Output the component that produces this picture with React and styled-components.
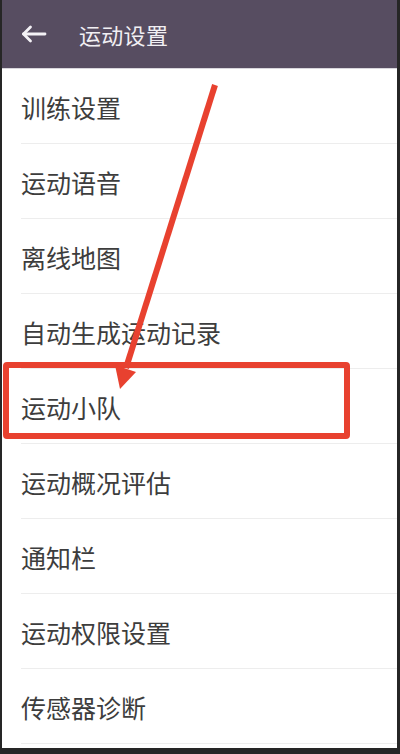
import React from 'react'
import styled, { createGlobalStyle } from 'styled-components'

const Global = createGlobalStyle`
  html, body { margin: 0; padding: 0; background: #2a2a2a; }
  body { font-family: "Noto Sans CJK SC", "Noto Sans", sans-serif; }
`

const Frame = styled.div`
  position: relative;
  width: 400px;
  height: 754px;
  box-sizing: border-box;
  border-left: 2px solid #262626;
  border-right: 3px solid #262626;
  border-bottom: 6px solid #262626;
  background: #fff;
  overflow: hidden;
`

const Toolbar = styled.header`
  height: 69px;
  background: #574d61;
  display: flex;
  align-items: center;
  padding-left: 19px;
  gap: 32px;
  border-bottom: 1px solid #d8d6dc;
  box-sizing: border-box;
`

const Title = styled.span`
  color: #f1eff3;
  font-size: 22px;
  letter-spacing: 0.3px;
`

const List = styled.ul`
  list-style: none;
  margin: 0;
  padding: 0;
`

const Row = styled.li`
  height: 75px;
  margin-left: 19px;
  display: flex;
  align-items: center;
  box-sizing: border-box;
  border-bottom: 1px solid #ededed;
  color: #3d3d3d;
  font-size: 25px;
  padding-top: 1px;
`

const Highlight = styled.div`
  position: absolute;
  left: 1px;
  top: 362px;
  width: 347px;
  height: 77px;
  box-sizing: border-box;
  border: 6px solid #e8412f;
  border-radius: 4px;
  pointer-events: none;
`

const Pointer = styled.svg`
  position: absolute;
  left: 0;
  top: 0;
  pointer-events: none;
`

const BackArrow = () => (
  <svg width="26" height="18" viewBox="0 0 26 18" fill="none" stroke="#f4f2f6" strokeWidth="2.8" strokeLinecap="round" strokeLinejoin="round">
    <path d="M2.5 9H24" />
    <path d="M9.5 2 2.5 9l7 7" />
  </svg>
)

const items = [
  '训练设置',
  '运动语音',
  '离线地图',
  '自动生成运动记录',
  '运动小队',
  '运动概况评估',
  '通知栏',
  '运动权限设置',
  '传感器诊断',
]

export default function App() {
  return (
    <>
      <Global />
      <Frame>
        <Toolbar>
          <BackArrow />
          <Title>运动设置</Title>
        </Toolbar>
        <List>
          {items.map((t) => (
            <Row key={t}>{t}</Row>
          ))}
        </List>
        <Highlight />
        <Pointer width="400" height="754" viewBox="0 0 400 754">
          <line x1="213" y1="85" x2="124" y2="368" stroke="#e8412f" strokeWidth="6" />
          <polygon points="113,365 134,372 118,389" fill="#e8412f" />
        </Pointer>
      </Frame>
    </>
  )
}
